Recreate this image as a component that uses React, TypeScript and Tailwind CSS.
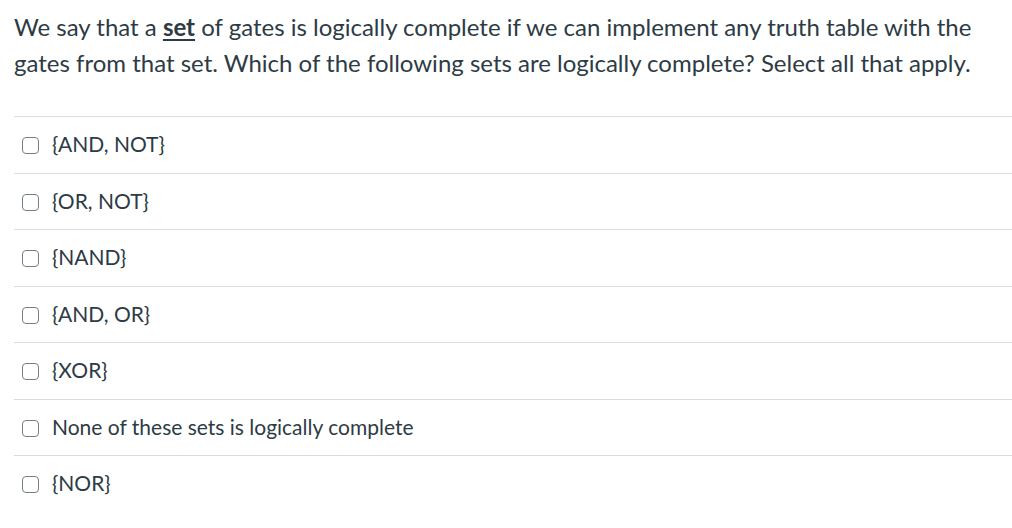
import React from 'react';

const options = [
  '{AND, NOT}',
  '{OR, NOT}',
  '{NAND}',
  '{AND, OR}',
  '{XOR}',
  'None of these sets is logically complete',
  '{NOR}',
];

export default function App() {
  return (
    <div className="w-[1012px] h-[528px] bg-white pl-[14px] text-[#2d3b45] font-['Lato',sans-serif] overflow-hidden">
      <p className="pt-[9px] pr-[20px] text-[24px] leading-[36px]">
        We say that a <span className="font-bold underline underline-offset-[3px] decoration-2">set</span> of gates is
        logically complete if we can implement any truth table with the gates from that set. Which of the following
        sets are logically complete? Select all that apply.
      </p>
      <div className="mt-[35px]">
        {options.map((opt) => (
          <label key={opt} className="flex items-center h-[56.5px] border-t border-[#dcdcdc] pl-[8px] gap-[13px]">
            <span className="w-[17px] h-[17px] mt-[2px] rounded-[4px] border border-[#73808a] bg-white shrink-0" />
            <span className="text-[21px] pb-[2px]">{opt}</span>
          </label>
        ))}
      </div>
    </div>
  );
}
